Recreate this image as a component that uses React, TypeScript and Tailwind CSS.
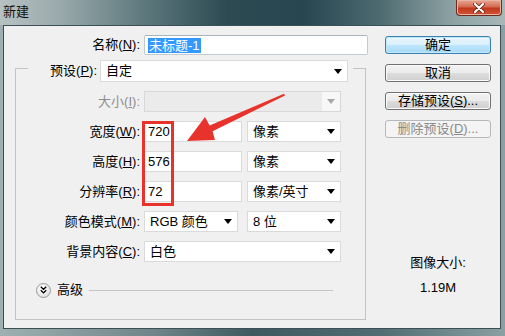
import React from "react";

const FONT = {
  fontFamily: '"Liberation Sans", "Noto Sans CJK SC", sans-serif',
};

function Arrow({ color = "#000" }: { color?: string }) {
  return (
    <svg width="8" height="5" viewBox="0 0 8 5" className="shrink-0">
      <polygon points="0,0 8,0 4,5" fill={color} />
    </svg>
  );
}

function Select({
  w,
  text,
  h = 21,
}: {
  w: number;
  text: string;
  h?: number;
}) {
  return (
    <div
      className="flex items-center justify-between bg-white border border-[#dadada] pl-[5px] pr-[5px] text-[13px] leading-[16px] text-black"
      style={{ width: w, height: h }}
    >
      <span>{text}</span>
      <Arrow />
    </div>
  );
}

function Input({ w, text }: { w: number; text: string }) {
  return (
    <div
      className="flex items-center bg-white border border-[#dadada] pl-[3px] text-[13px] leading-[16px] text-black h-[21px]"
      style={{ width: w }}
    >
      {text}
    </div>
  );
}

function Label({
  children,
  w = 124,
  disabled = false,
}: {
  children: React.ReactNode;
  w?: number;
  disabled?: boolean;
}) {
  return (
    <div
      className={
        "shrink-0 text-right text-[13px] leading-[16px] " +
        (disabled ? "text-[#8e8e8e]" : "text-black")
      }
      style={{ width: w }}
    >
      {children}
    </div>
  );
}

function Btn({
  children,
  kind = "normal",
}: {
  children: React.ReactNode;
  kind?: "default" | "normal" | "disabled";
}) {
  const cls =
    kind === "default"
      ? "border-[#3c7fb1] bg-[linear-gradient(180deg,#eaf6fd_0%,#d9f0fc_50%,#bee6fd_51%,#a7d9f5_100%)] shadow-[inset_0_0_0_1px_#bfe8fb] text-black"
      : kind === "disabled"
      ? "border-[#b5b9bc] bg-[#f4f4f4] text-[#8a8a8a]"
      : "border-[#707070] bg-[linear-gradient(180deg,#f2f2f2_0%,#ebebeb_50%,#dddddd_51%,#cfcfcf_100%)] shadow-[inset_0_0_0_1px_#fbfbfb] text-black";
  return (
    <div
      className={
        "h-[18px] w-[106px] flex items-center justify-center rounded-[3px] border text-[13px] leading-[16px] " +
        cls
      }
    >
      {children}
    </div>
  );
}

export default function App() {
  return (
    <div
      className="relative w-[505px] h-[336px] overflow-hidden flex flex-col bg-[linear-gradient(90deg,#9fb0b2_0%,#6f878a_30%,#3d5a60_50%,#4f6d72_75%,#8aa0a2_100%)]"
      style={FONT}
    >
      {/* title bar */}
      <div className="h-[25px] shrink-0 flex items-start justify-between bg-[linear-gradient(90deg,#b7c1c2_0%,#9aa9ab_12%,#5f7a7f_28%,#2d4a52_45%,#274650_60%,#4d6a70_75%,#8ea3a5_90%,#a9b7b8_100%)]">
        <div className="pl-[3px] pt-[4px] text-[13px] leading-[16px] text-[#111]">
          新建
        </div>
        <div className="mr-[3px] w-[46px] h-[16px] rounded-b-[4px] border border-t-0 border-[#6b2b20] bg-[linear-gradient(180deg,#e9a996_0%,#d46a50_45%,#c2381c_55%,#d0553a_100%)] shadow-[inset_0_0_0_1px_#eab4a3] flex items-center justify-center">
          <svg width="12" height="10" viewBox="0 0 12 10">
            <path
              d="M2 1 L10 9 M10 1 L2 9"
              stroke="#5a1f14"
              strokeWidth="3.6"
              strokeLinecap="round"
            />
            <path
              d="M2 1 L10 9 M10 1 L2 9"
              stroke="#ffffff"
              strokeWidth="2.2"
              strokeLinecap="round"
            />
          </svg>
        </div>
      </div>

      {/* body */}
      <div className="ml-[3px] w-[498px] h-[304px] border border-[#3b4f55] bg-[#f0f0f0] flex">
        {/* left column */}
        <div className="flex flex-col">
          <div className="mt-[9px] flex items-center h-[20px]">
            <Label w={136}>
              名称(<u>N</u>):
            </Label>
            <div className="ml-[4px] w-[224px] h-[20px] bg-white border border-[#c4cad2] border-t-[#a9b3bd] rounded-[2px] flex items-center pl-[3px]">
              <span className="bg-[#3399ff] text-white text-[13px] leading-[15px] px-[1px]">
                未标题-1
              </span>
            </div>
          </div>

          {/* group box */}
          <div className="mt-[13px] ml-[11px] w-[351px] h-[252px] border border-[#c3c3c3] flex flex-col">
            <div className="-mt-[9px] ml-[12px] w-[325px] h-[22px] bg-[#f0f0f0] flex items-center">
              <Label w={69}>
                预设(<u>P</u>):
              </Label>
              <div className="ml-[3px]">
                <Select w={248} h={22} text="自定" />
              </div>
            </div>

            <div className="mt-[9px] flex flex-col gap-[9px]">
              <div className="flex items-center h-[21px]">
                <Label disabled>
                  大小(<u>I</u>):
                </Label>
                <div className="ml-[4px] w-[197px] h-[21px] border border-[#d8d8d8] bg-[#ebebeb] flex items-center justify-end">
                  <div className="w-[18px] h-full bg-[#f7f7f7] flex items-center justify-center">
                    <Arrow color="#a8a8a8" />
                  </div>
                </div>
              </div>

              <div className="flex items-center h-[21px]">
                <Label>
                  宽度(<u>W</u>):
                </Label>
                <div className="ml-[4px]">
                  <Input w={98} text="720" />
                </div>
                <div className="ml-[5px]">
                  <Select w={94} text="像素" />
                </div>
              </div>

              <div className="flex items-center h-[21px]">
                <Label>
                  高度(<u>H</u>):
                </Label>
                <div className="ml-[4px]">
                  <Input w={98} text="576" />
                </div>
                <div className="ml-[5px]">
                  <Select w={94} text="像素" />
                </div>
              </div>

              <div className="flex items-center h-[21px]">
                <Label>
                  分辨率(<u>R</u>):
                </Label>
                <div className="ml-[4px]">
                  <Input w={98} text="72" />
                </div>
                <div className="ml-[5px]">
                  <Select w={94} text="像素/英寸" />
                </div>
              </div>

              <div className="flex items-center h-[21px]">
                <Label>
                  颜色模式(<u>M</u>):
                </Label>
                <div className="ml-[4px]">
                  <Select w={94} text="RGB 颜色" />
                </div>
                <div className="ml-[9px]">
                  <Select w={94} text="8 位" />
                </div>
              </div>

              <div className="flex items-center h-[21px]">
                <Label>
                  背景内容(<u>C</u>):
                </Label>
                <div className="ml-[4px]">
                  <Select w={197} text="白色" />
                </div>
              </div>
            </div>

            <div className="mt-[20px] h-[16px] flex items-center">
              <div className="ml-[20px] w-[15px] h-[15px] rounded-full border border-[#9a9a9a] bg-[radial-gradient(circle_at_40%_35%,#ffffff_0%,#e8e8e8_60%,#cfcfcf_100%)] flex items-center justify-center">
                <svg width="7" height="8" viewBox="0 0 7 8">
                  <path
                    d="M0.8 0.8 L3.5 3.4 L6.2 0.8 M0.8 4.3 L3.5 6.9 L6.2 4.3"
                    stroke="#000"
                    strokeWidth="1.4"
                    fill="none"
                  />
                </svg>
              </div>
              <div className="ml-[6px] text-[13px] leading-[16px] text-black">
                高级
              </div>
              <div className="ml-[6px] mr-[32px] flex-1 h-px bg-[#c6c6c6]" />
            </div>
          </div>
        </div>

        {/* right column */}
        <div className="ml-[17px] w-[106px] flex flex-col">
          <div className="mt-[10px] flex flex-col gap-[10px]">
            <Btn kind="default">确定</Btn>
            <Btn>取消</Btn>
            <Btn>
              存储预设(<u>S</u>)...
            </Btn>
            <Btn kind="disabled">
              删除预设(<u>D</u>)...
            </Btn>
          </div>
          <div className="mt-[117px] text-center text-[13px] leading-[16px] text-black">
            图像大小:
          </div>
          <div className="mt-[9px] text-center text-[13px] leading-[16px] text-black">
            1.19M
          </div>
        </div>
      </div>

      {/* red highlight box */}
      <div className="absolute left-[142px] top-[121px] w-[32px] h-[85px] border-[3px] border-[#e8322c]" />

      {/* red arrow */}
      <svg
        className="absolute left-0 top-0 pointer-events-none"
        width="505"
        height="336"
        viewBox="0 0 505 336"
      >
        <polygon
          points="285,95.6 284,93.8 209.6,125.5 205,117 187,141 215,140 212.6,131.2"
          fill="#e8332d"
        />
      </svg>
    </div>
  );
}
